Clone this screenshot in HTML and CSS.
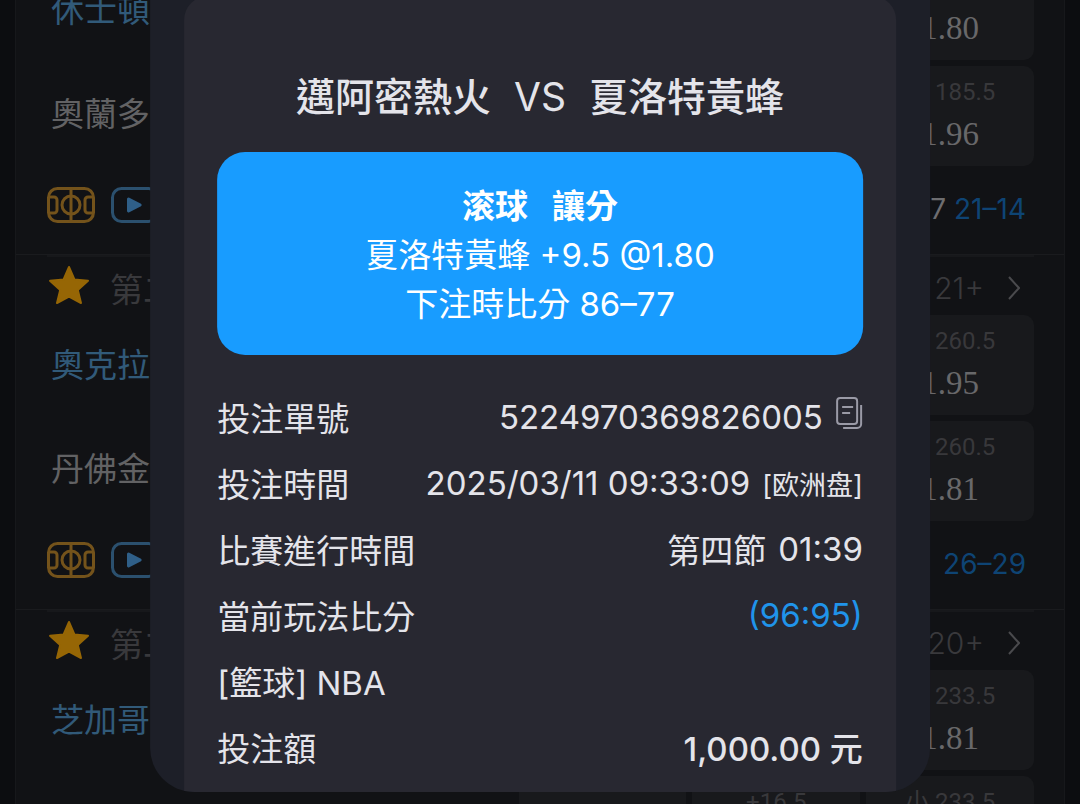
FILE: index.html
```html
<!DOCTYPE html>
<html lang="zh-Hant">
<head>
  <meta charset="UTF-8" />
  <meta name="viewport" content="width=device-width, initial-scale=1" />
  <title>投注單</title>
  <link rel="stylesheet" href="styles.css">
</head>
<body>

  <!-- icons -->
  <svg class="sprite" aria-hidden="true">
    <symbol id="court" viewBox="0 0 48 36">
      <rect x="1.500" y="1.500" width="45" height="33" rx="9" />
      <path d="M24 1v34M1 10h6a3 3 0 0 1 3 3v10a3 3 0 0 1-3 3H1M47 10h-6a3 3 0 0 0-3 3v10a3 3 0 0 0 3 3h6" />
      <circle cx="24" cy="18" r="9" />
    </symbol>
    <symbol id="play" viewBox="0 0 48 36">
      <rect x="1.500" y="1.500" width="45" height="33" rx="9" />
      <path class="fill" d="M16 12v12a1.500 1.500 0 0 0 2.300 1.200L30 19.200a1.500 1.500 0 0 0 0-2.400L18.300 10.800A1.500 1.500 0 0 0 16 12z" />
    </symbol>
    <symbol id="star" viewBox="0 0 42 40">
      <path d="M21 2l5.400 12.400L40 15.800 29.800 25l3.200 13L21 31.600 9 38l3.200-13L2 15.800l13.600-1.400z" />
    </symbol>
  </svg>

  <main class="board">
    <section class="match">
      <div class="match-grid">
        <p class="team lead">休士頓火箭</p>
        <button class="odd col3"><span class="price">1.80</span></button>
        <p class="team">奧蘭多魔術</p>
        <button class="odd col3"><span class="line">小 185.5</span><span class="price">1.96</span></button>
      </div>
      <div class="match-foot">
        <button class="icon-btn" aria-label="球場"><svg class="court"><use href="#court" /></svg></button>
        <button class="icon-btn" aria-label="直播"><svg class="play"><use href="#play" /></svg></button>
        <p class="score">77 <span>21–14</span></p>
      </div>
    </section>

    <section class="match">
      <div class="match-head">
        <button class="icon-btn" aria-label="收藏"><svg class="star"><use href="#star" /></svg></button>
        <span class="period">第二節</span>
        <a class="more" href="#">21+ <svg viewBox="0 0 12 24"><path d="M1 1l10 11L1 23" /></svg></a>
      </div>
      <div class="match-grid">
        <p class="team lead">奧克拉荷馬</p>
        <button class="odd col3"><span class="line">大 260.5</span><span class="price">1.95</span></button>
        <p class="team">丹佛金塊</p>
        <button class="odd col3"><span class="line">小 260.5</span><span class="price">1.81</span></button>
      </div>
      <div class="match-foot">
        <button class="icon-btn" aria-label="球場"><svg class="court"><use href="#court" /></svg></button>
        <button class="icon-btn" aria-label="直播"><svg class="play"><use href="#play" /></svg></button>
        <p class="score"><span>26–29</span></p>
      </div>
    </section>

    <section class="match">
      <div class="match-head">
        <button class="icon-btn" aria-label="收藏"><svg class="star"><use href="#star" /></svg></button>
        <span class="period">第二節</span>
        <a class="more" href="#">20+ <svg viewBox="0 0 12 24"><path d="M1 1l10 11L1 23" /></svg></a>
      </div>
      <div class="match-grid">
        <p class="team lead">芝加哥公牛</p>
        <button class="odd col3"><span class="line">大 233.5</span><span class="price">1.81</span></button>
        <button class="odd col1" aria-label="獨贏" disabled></button>
        <button class="odd col2"><span class="line">+16.5</span></button>
        <button class="odd col3"><span class="line">小 233.5</span></button>
      </div>
    </section>
  </main>

  <div class="modal" role="dialog" aria-labelledby="slipTitle">
    <div class="slip">
      <h1 id="slipTitle"><span>邁阿密熱火</span><span>VS</span><span>夏洛特黃蜂</span></h1>

      <div class="pick">
        <p class="pick-type"><span>滚球</span><span>讓分</span></p>
        <p>夏洛特黃蜂 +9.5 @1.80</p>
        <p>下注時比分 86–77</p>
      </div>

      <dl class="info">
        <div>
          <dt>投注單號</dt>
          <dd>5224970369826005
            <button class="copy" aria-label="複製">
              <svg viewBox="0 0 28 34"><rect x="2" y="2" width="20" height="26" rx="3" /><path d="M7 11h11M7 17h8M26 9v19a4 4 0 0 1-4 4H8" /></svg>
            </button>
          </dd>
        </div>
        <div>
          <dt>投注時間</dt>
          <dd>2025/03/11 09:33:09 <small lang="zh-Hans">[欧洲盘]</small></dd>
        </div>
        <div>
          <dt>比賽進行時間</dt>
          <dd><span>第四節</span> <span>01:39</span></dd>
        </div>
        <div>
          <dt>當前玩法比分</dt>
          <dd class="live">(96:95)</dd>
        </div>
        <div>
          <dt>[籃球] NBA</dt>
        </div>
        <div>
          <dt>投注額</dt>
          <dd class="stake">1,000.00 元</dd>
        </div>
      </dl>
    </div>
  </div>

</body>
</html>
```
FILE: styles.css
```css
* {
  box-sizing: border-box;
}

html {
  height: 100%;
  overflow: hidden;
  background: #0c0d10;
}

body {
  margin: 0;
  height: 100%;
  position: relative;
  overflow: hidden;
  font-family: Inter, "Noto Sans CJK TC", sans-serif;
  color: #e4e4ea;
}

p, h1, dl, dd {
  margin: 0;
}

button {
  padding: 0;
  border: none;
  background: none;
  font-family: inherit;
  color: inherit;
}

.sprite {
  display: none;
}

/* match list behind the dialog */
.board {
  margin: -41px 15px 0;
  border: 1px solid #17181b;
  background: #111215;
}

.match {
  padding: 0 30px 0 31px;
  border-bottom: 1px solid #1a1b1e;
}

.match-head {
  display: flex;
  align-items: center;
  height: 60px;
  padding-top: 4px;
  border-top: 2px solid #17181b;
}

.match-grid {
  display: grid;
  grid-template-columns: 1fr repeat(3, 17%);
  grid-auto-rows: 100px;
  gap: 6px;
}

.match-foot {
  display: flex;
  gap: 16px;
  height: 88px;
  padding-top: 20px;
}

.icon-btn {
  display: flex;
  align-items: center;
  height: 38px;
}

.court, .play {
  width: 48px;
  height: 38px;
  fill: none;
  stroke: #74531b;
  stroke-width: 3;
}

.play {
  stroke: #2b506e;
}

.play, .fill {
  color: #2f5f88;
}

.fill {
  fill: currentColor;
  stroke: none;
}

.star {
  width: 44px;
  height: 46px;
  padding-bottom: 6px;
  fill: #966605;
  stroke: #966605;
  stroke-width: 2;
  stroke-linejoin: round;
}

.period {
  margin-left: 19px;
  font-size: 33px;
  color: #39393c;
}

.more {
  display: flex;
  align-items: center;
  gap: 24px;
  margin-left: auto;
  padding-right: 14px;
  font-size: 30px;
  font-weight: 300;
  color: #39393c;
  text-decoration: none;
}

.more svg {
  width: 12px;
  height: 24px;
  fill: none;
  stroke: #4a4a4d;
  stroke-width: 2;
}

.team {
  padding-left: 4px;
  font-size: 33px;
  line-height: 96px;
  color: #626264;
}

.team.lead {
  line-height: 100px;
  color: #315a79;
}

.odd {
  display: flex;
  flex-direction: column;
  align-items: center;
  justify-content: flex-end;
  padding-bottom: 11px;
  border-radius: 10px;
  background: #18191c;
}

.col1 { grid-column: 2; }
.col2 { grid-column: 3; }
.col3 { grid-column: 4; }

.line {
  margin-bottom: auto;
  padding-top: 9px;
  font-family: Roboto, "Noto Sans CJK TC", sans-serif;
  font-size: 24px;
  line-height: 34px;
  color: #38383b;
}

.price {
  font-family: "Liberation Serif", serif;
  font-size: 33px;
  line-height: 42px;
  color: #68686a;
}

.score {
  margin-left: auto;
  padding-right: 8px;
  font-size: 28px;
  line-height: 46px;
  color: #6d6d6f;
}

.score span {
  color: #0e4474;
}

/* bet slip dialog */
.modal {
  position: absolute;
  top: 0;
  left: 50%;
  width: 72.2%;
  transform: translateX(-50%);
  padding: 0 34px;
  border-radius: 0 0 44px 44px;
  overflow: hidden;
  background: #1d1f28;
}

.slip {
  margin-top: -4px;
  padding: 73px 33px 12px;
  border-radius: 24px 24px 0 0;
  background: #282831;
}

.slip h1 {
  display: flex;
  justify-content: center;
  gap: 23px;
  font-size: 39px;
  line-height: 56px;
  font-weight: 500;
}

.slip h1 span:nth-child(2) {
  font-weight: 400;
}

.pick {
  margin-top: 27px;
  padding: 30px 20px 26px;
  border-radius: 28px;
  background: #189cff;
  color: #fff;
  font-size: 33px;
  line-height: 49px;
  text-align: center;
}

.pick-type {
  display: flex;
  justify-content: center;
  gap: 24px;
  font-weight: 700;
}

.info {
  margin-top: 29px;
  font-size: 33px;
}

.info div {
  display: flex;
  align-items: center;
  justify-content: space-between;
  height: 66px;
}

.info dd {
  display: flex;
  align-items: center;
  gap: 12px;
}

.info small {
  font-family: Inter, "Noto Sans CJK SC", sans-serif;
  font-size: 27px;
}

.copy {
  display: flex;
  width: 28px;
  height: 42px;
}

.copy svg {
  width: 28px;
  height: 34px;
  fill: none;
  stroke: #9a9aa6;
  stroke-width: 2;
}

.info .live {
  color: #2094ea;
}

.info .stake {
  font-weight: 500;
}
```
